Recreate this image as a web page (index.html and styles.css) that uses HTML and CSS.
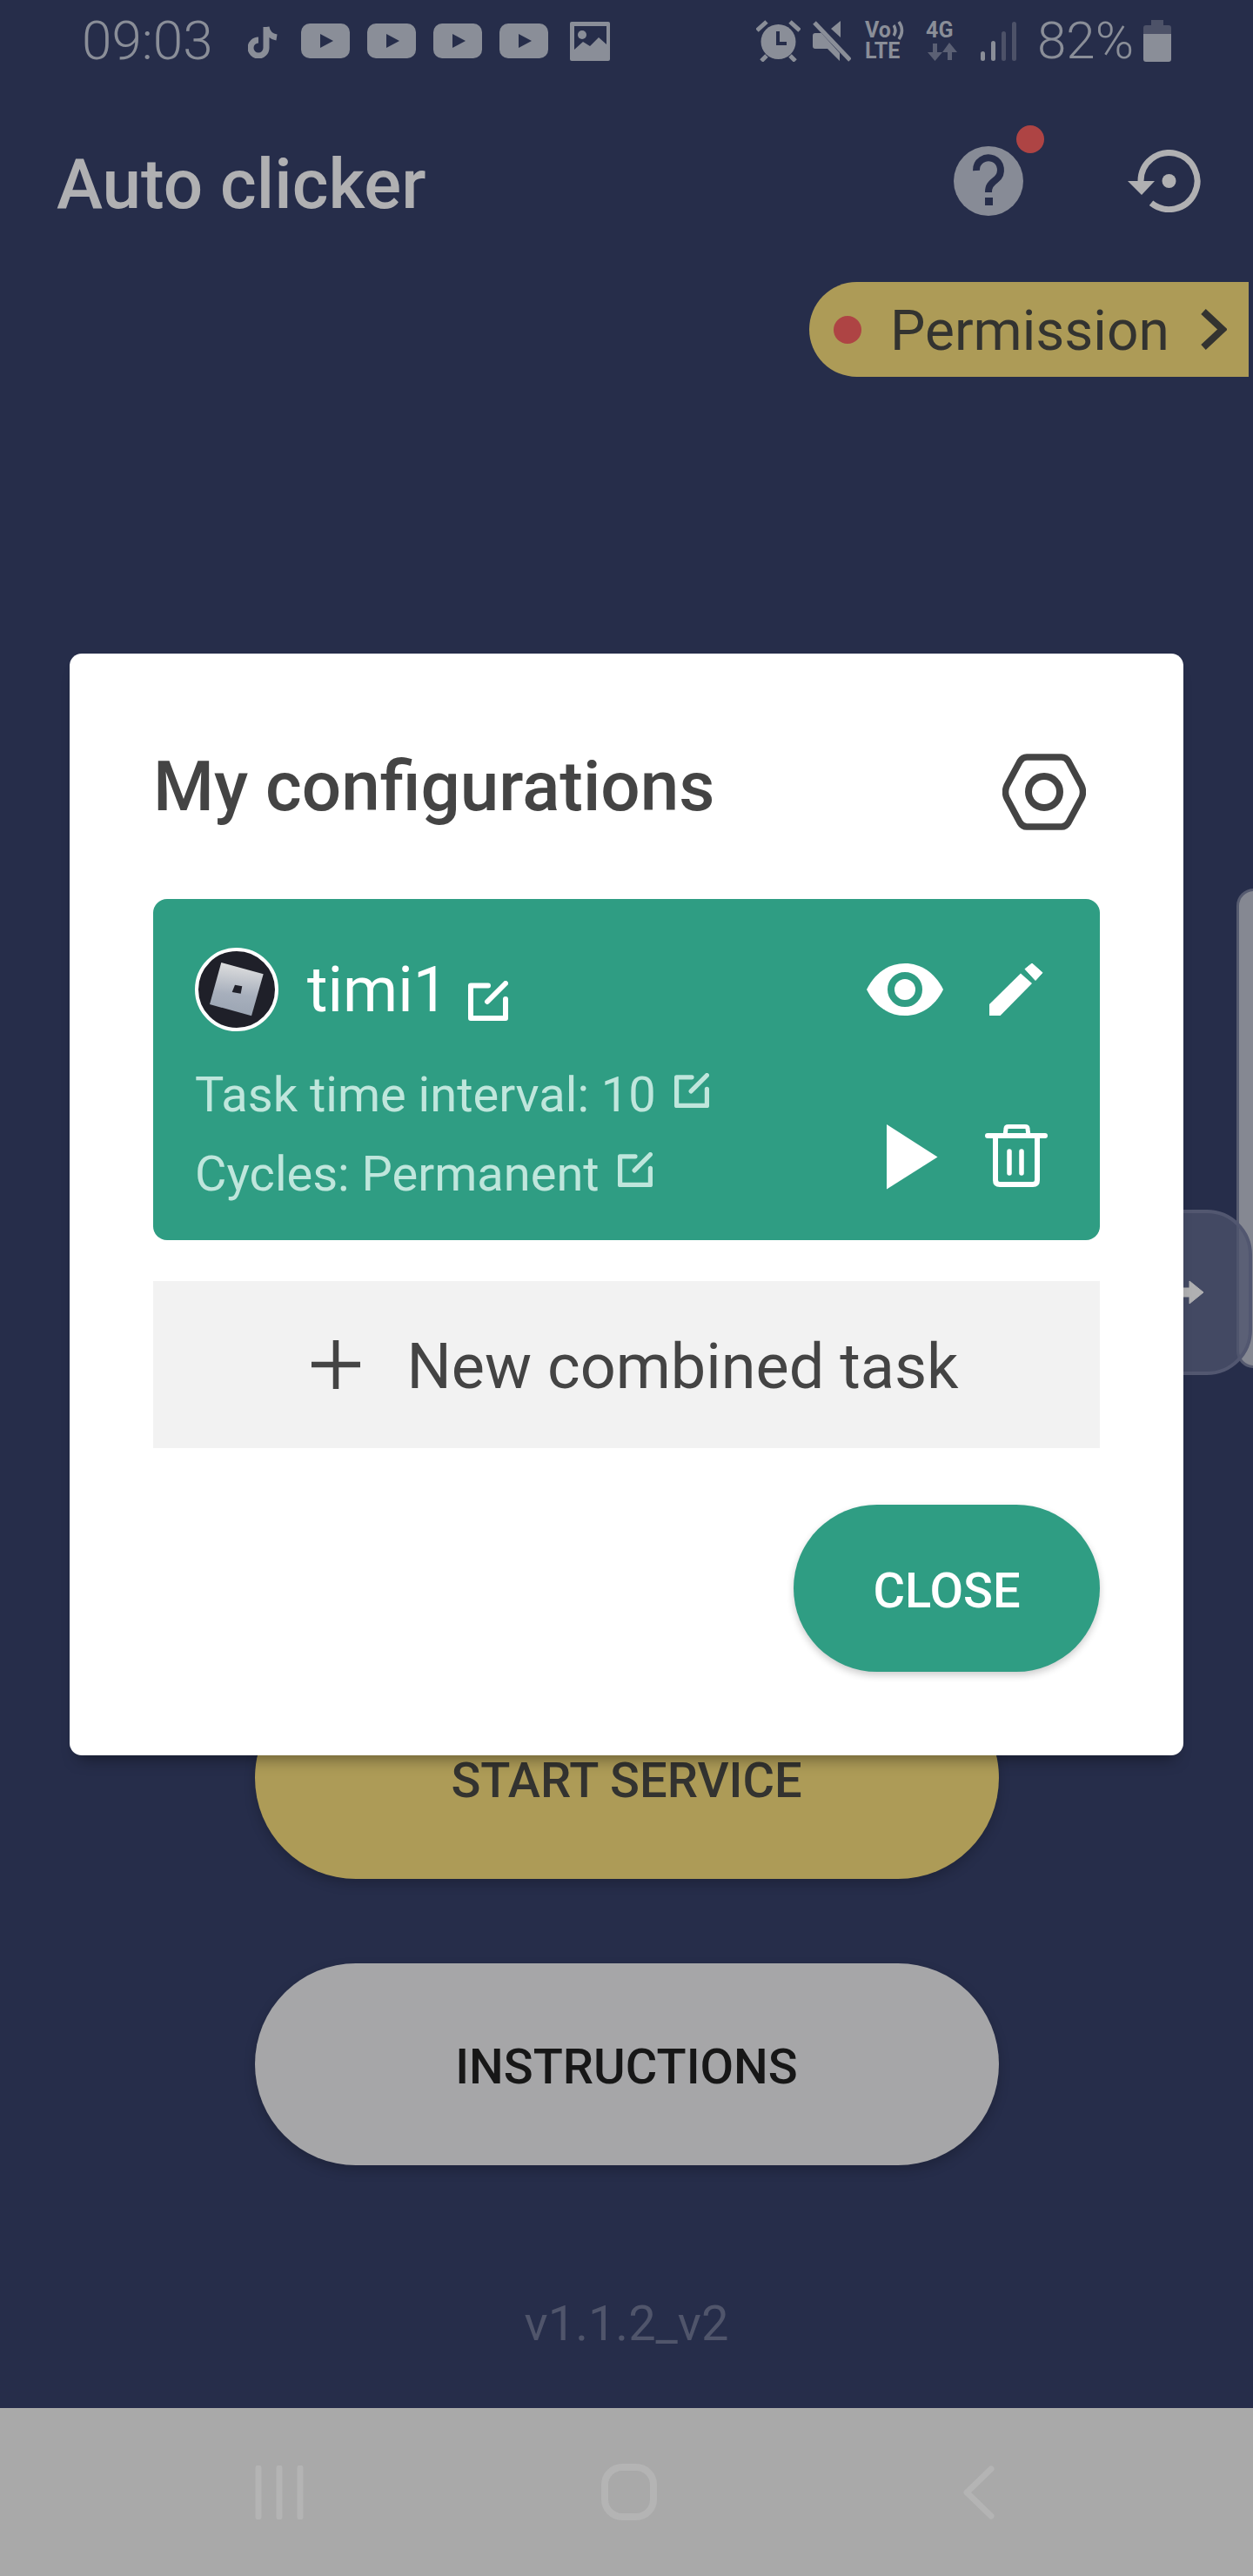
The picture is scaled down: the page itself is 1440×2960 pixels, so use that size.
FILE: index.html
```html
<!DOCTYPE html>
<html lang="en">
<head>
    <meta charset="UTF-8">
    <meta name="viewport" content="width=device-width, initial-scale=1.0">
    <title>Auto clicker</title>
    <link rel="stylesheet" href="styles.css">
</head>
<body>
    <svg class="sprite" aria-hidden="true">
        <symbol id="icon-yt" viewBox="0 0 56 40">
            <rect width="56" height="40" rx="10" fill="#8a8e98"/>
            <path d="M22 12L37 20L22 28Z" fill="#262d4a"/>
        </symbol>
        <symbol id="icon-edit" viewBox="0 0 46 46">
            <path d="M23 5.5H3V43H43V21M22 24L43 3" fill="none" stroke="currentColor" stroke-width="6" stroke-linecap="round" stroke-linejoin="round"/>
        </symbol>
    </svg>

    <div class="screen">
        <div class="status-bar">
            <div class="status-left">
                <span class="status-time">09:03</span>
                <svg class="st-tiktok" width="34" height="39" viewBox="0 0 34 39">
                    <path d="M21 3V27A9 9 0 1 1 12 18M21 3C22 10 27 14 33 15" fill="none" stroke="#8a8e98" stroke-width="7"/>
                </svg>
                <svg class="st-yt" width="56" height="40"><use href="#icon-yt"/></svg>
                <svg class="st-yt-next" width="56" height="40"><use href="#icon-yt"/></svg>
                <svg class="st-yt-next" width="56" height="40"><use href="#icon-yt"/></svg>
                <svg class="st-yt-next" width="56" height="40"><use href="#icon-yt"/></svg>
                <svg class="st-image" width="46" height="45" viewBox="0 0 46 45">
                    <rect width="46" height="45" rx="2" fill="#8a8e98"/>
                    <path d="M5 5H42V26L33 18L23 28L15 23L5 32Z" fill="#262d4a"/>
                    <circle cx="14" cy="15" r="5" fill="#8a8e98"/>
                </svg>
            </div>
            <div class="status-right">
                <svg width="51" height="48" viewBox="0 0 51 48">
                    <circle cx="25.5" cy="25" r="20" fill="#8a8e98"/>
                    <path d="M25 13V27H35" fill="none" stroke="#262d4a" stroke-width="4"/>
                    <path d="M1 12L12 2M50 12L39 2M6 47L12 41M45 47L39 41" stroke="#8a8e98" stroke-width="5"/>
                </svg>
                <svg class="st-mute" width="44" height="48" viewBox="0 0 44 48">
                    <path d="M32 1V20L21 10ZM3 15H10L31 38V47L17 33H3Q0 33 0 30V18Q0 15 3 15Z" fill="#8a8e98"/>
                    <path d="M2 3L43 46" stroke="#8a8e98" stroke-width="5"/>
                </svg>
                <div class="st-volte">
                    <span class="st-small">Vo</span>
                    <span class="st-small">LTE</span>
                    <svg class="st-waves" width="16" height="24" viewBox="0 0 16 24">
                        <path d="M1 6Q5 12 1 18M7 2Q14 12 7 22" fill="none" stroke="#8a8e98" stroke-width="3.5"/>
                    </svg>
                </div>
                <div class="st-net">
                    <span class="st-small">4G</span>
                    <svg width="37" height="24" viewBox="0 0 37 24">
                        <path d="M8 3H13V13H19L10.500 23L2 13H8Z" fill="#5b6074"/>
                        <path d="M27 2L36 13H30V22H25V13H19Z" fill="#5b6074"/>
                    </svg>
                </div>
                <svg class="st-signal" width="41" height="45" viewBox="0 0 41 45">
                    <rect x="0" y="34" width="5" height="11" rx="2.500" fill="#8a8e98"/>
                    <rect x="12" y="22" width="5" height="23" rx="2.500" fill="#8a8e98"/>
                    <rect x="24" y="11" width="5" height="34" rx="2.500" fill="#4d5268"/>
                    <rect x="36" y="0" width="5" height="45" rx="2.500" fill="#4d5268"/>
                </svg>
                <span class="status-pct">82%</span>
                <svg class="st-battery" width="32" height="48" viewBox="0 0 32 48">
                    <path d="M9 0H23V6H29Q32 6 32 9V16H0V9Q0 6 3 6H9Z" fill="#4d5268"/>
                    <path d="M0 16H32V45Q32 48 29 48H3Q0 48 0 45Z" fill="#8a8e98"/>
                </svg>
            </div>
        </div>

        <div class="app-bar">
            <h1 class="app-title">Auto clicker</h1>
            <div class="app-actions">
                <div class="help-icon">
                    <svg width="80" height="80" viewBox="0 0 80 80">
                        <circle cx="40" cy="40" r="40" fill="#878b96"/>
                        <path d="M26 28A14 14 0 1 1 49 38C43 43 40 45 40 53" fill="none" stroke="#262d4a" stroke-width="8"/>
                        <rect x="36" y="59" width="9" height="9" fill="#262d4a"/>
                    </svg>
                    <span class="help-dot"></span>
                </div>
                <svg width="84" height="72" viewBox="0 0 84 72">
                    <path d="M15 36A32.500 32.500 0 1 1 27 61.300" fill="none" stroke="#b0b0b2" stroke-width="7"/>
                    <circle cx="47.500" cy="36" r="8" fill="#b0b0b2"/>
                    <path d="M0 36H31L16 52Z" fill="#b0b0b2"/>
                </svg>
            </div>
        </div>

        <div class="permission">
            <span class="permission-dot"></span>
            <span class="permission-text">Permission</span>
            <svg width="30" height="47" viewBox="0 0 30 47">
                <path d="M3 3L25 23.500L3 44" fill="none" stroke="#333330" stroke-width="8"/>
            </svg>
        </div>

        <div class="main-actions">
            <div class="pill-btn pill-gold">START SERVICE</div>
            <div class="pill-btn pill-grey">INSTRUCTIONS</div>
        </div>
        <p class="version">v1.1.2_v2</p>

        <div class="nav-bar">
            <svg width="60" height="62" viewBox="0 0 60 62">
                <path d="M6 3V59M30 3V59M54 3V59" stroke="#b4b4b4" stroke-width="7" stroke-linecap="round"/>
            </svg>
            <svg width="64" height="65" viewBox="0 0 64 65">
                <rect x="4" y="4" width="56" height="57" rx="20" fill="none" stroke="#b4b4b4" stroke-width="8"/>
            </svg>
            <svg width="38" height="62" viewBox="0 0 38 62">
                <path d="M33 4L5 31L33 58" fill="none" stroke="#b4b4b4" stroke-width="7" stroke-linecap="round" stroke-linejoin="round"/>
            </svg>
        </div>

        <!-- floating panel on the right edge, sits behind the dialog -->
        <div class="side-panel"></div>
        <div class="side-tab">
            <svg width="28" height="28" viewBox="0 0 28 28">
                <path d="M0 9H11V1L27 14L11 27V19H0Z" fill="#b0b0b2" stroke="#b0b0b2" stroke-width="1" stroke-linejoin="round"/>
            </svg>
        </div>

        <div class="dialog">
            <div class="dialog-header">
                <h2 class="dialog-title">My configurations</h2>
                <svg width="96" height="88" viewBox="0 0 96 88">
                    <path d="M28 4H68Q73 4 76 9L91 37Q94 44 91 51L76 79Q73 84 68 84H28Q23 84 20 79L5 51Q2 44 5 37L20 9Q23 4 28 4Z" fill="none" stroke="#444" stroke-width="7.500"/>
                    <circle cx="48" cy="44" r="18" fill="none" stroke="#444" stroke-width="8"/>
                </svg>
            </div>

            <div class="config-card">
                <div class="config-info">
                    <div class="config-name-row">
                        <svg class="avatar" width="96" height="96" viewBox="0 0 96 96">
                            <defs>
                                <linearGradient id="tile" x1="0.5" y1="0" x2="0.4" y2="1">
                                    <stop offset="0" stop-color="#e0e0e0"/>
                                    <stop offset="0.6" stop-color="#a7afbc"/>
                                    <stop offset="1" stop-color="#9aa4b2"/>
                                </linearGradient>
                            </defs>
                            <circle cx="48" cy="48" r="46" fill="#1f2029" stroke="#fff" stroke-width="4"/>
                            <path d="M30.300 17L78.700 30.300L65 78.300L17 65Z" fill="url(#tile)"/>
                            <path d="M46 42.700L54.300 44.300L52.700 52.700L42.700 51Z" fill="#1f2029"/>
                        </svg>
                        <span class="config-name">timi1</span>
                        <svg class="edit-name" width="46" height="46"><use href="#icon-edit"/></svg>
                    </div>
                    <div class="config-line config-line-first">
                        <span>Task time interval: 10</span>
                        <svg width="40" height="40"><use href="#icon-edit"/></svg>
                    </div>
                    <div class="config-line">
                        <span>Cycles: Permanent</span>
                        <svg width="40" height="40"><use href="#icon-edit"/></svg>
                    </div>
                </div>

                <div class="config-actions">
                    <svg width="88" height="60" viewBox="0 0 88 60">
                        <path d="M0 30C10 10 26 0 44 0S78 10 88 30C78 50 62 60 44 60S10 50 0 30Z" fill="#fff"/>
                        <circle cx="44" cy="30" r="16" fill="none" stroke="#2f9d83" stroke-width="8"/>
                    </svg>
                    <svg width="62" height="60" viewBox="0 0 62 60">
                        <path d="M0 47L36 11.500L49 23L12.600 60H0Z" fill="#fff"/>
                        <path d="M41 6.500L49 0L61 10.700L53 19.500Z" fill="#fff" stroke="#fff" stroke-width="1" stroke-linejoin="round"/>
                    </svg>
                    <svg class="play-icon" width="59" height="75" viewBox="0 0 59 75">
                        <path d="M0 0L58.500 37.500L0 74.600Z" fill="#fff"/>
                    </svg>
                    <svg width="72" height="72" viewBox="0 0 72 72">
                        <path d="M23 13L24 5Q24 2.500 27 2.500H46Q49 2.500 49 5L50 13" fill="none" stroke="#fff" stroke-width="5"/>
                        <path d="M3 13H69" stroke="#fff" stroke-width="6" stroke-linecap="round"/>
                        <path d="M12 13V64Q12 69 17 69H55Q60 69 60 64V13" fill="none" stroke="#fff" stroke-width="6"/>
                        <path d="M28 31V56M42 31V56" stroke="#fff" stroke-width="5.500" stroke-linecap="round"/>
                    </svg>
                </div>
            </div>

            <div class="new-task">
                <svg width="56" height="56" viewBox="0 0 56 56">
                    <path d="M28 0V56M0 28H56" stroke="#444" stroke-width="6.500"/>
                </svg>
                <span class="new-task-label">New combined task</span>
            </div>

            <div class="dialog-footer">
                <div class="close-btn">CLOSE</div>
            </div>
        </div>
    </div>
</body>
</html>
```

FILE: styles.css
```css
* {
    margin: 0;
    padding: 0;
    box-sizing: border-box;
}

body {
    font-family: Roboto, 'Noto Sans', sans-serif;
    background: #262d4a;
}

svg {
    display: block;
    flex-shrink: 0;
}

.sprite {
    position: absolute;
    width: 0;
    height: 0;
}

.screen {
    position: relative;
    width: 1440px;
    height: 2960px;
    overflow: hidden;
    display: flex;
    flex-direction: column;
    background: #262d4a;
}

/* status bar */
.status-bar {
    height: 94px;
    padding: 0 94px 0 94px;
    display: flex;
    align-items: center;
    justify-content: space-between;
    color: #8a8e98;
}

.status-left,
.status-right {
    display: flex;
    align-items: center;
}

.status-time,
.status-pct {
    font-weight: 300;
    line-height: 94px;
}

.status-time { font-size: 62px; }
.status-pct { font-size: 60px; }

.st-tiktok { margin-left: 40px; }
.st-yt { margin-left: 27px; }
.st-yt-next { margin-left: 20px; }
.st-image { margin-left: 25px; }
.st-mute { margin-left: 14px; }
.status-pct { margin-left: 24px; }
.st-battery { margin-left: 11px; }

.st-volte,
.st-net {
    position: relative;
    height: 48px;
    display: flex;
    flex-direction: column;
}

.st-volte {
    width: 48px;
    margin-left: 16px;
}

.st-net {
    width: 37px;
    margin-left: 22px;
}

.st-signal { margin-left: 26px; }

.st-small {
    height: 24px;
    font-size: 25px;
    font-weight: 700;
    line-height: 24px;
    color: #8a8e98;
}

.st-waves {
    position: absolute;
    top: 0;
    right: 0;
}

/* app bar */
.app-bar {
    height: 228px;
    padding: 0 60px 0 65px;
    display: flex;
    align-items: center;
    justify-content: space-between;
}

.app-title {
    font-size: 80px;
    font-weight: 500;
    color: #b0b0b2;
    padding-top: 8px;
}

.app-actions {
    display: flex;
    align-items: center;
    gap: 120px;
}

.help-icon {
    position: relative;
}

.help-dot {
    position: absolute;
    top: -24px;
    left: 72px;
    width: 32px;
    height: 32px;
    border-radius: 50%;
    background: #ae4444;
}

/* permission pill */
.permission {
    align-self: flex-end;
    width: 505px;
    height: 109px;
    margin: 2px 5px 0 0;
    padding-left: 28px;
    display: flex;
    align-items: center;
    background: #ad9b57;
    border-radius: 55px 0 0 55px;
}

.permission-dot {
    width: 32px;
    height: 32px;
    border-radius: 50%;
    background: #ae4444;
}

.permission-text {
    margin: 0 36px 0 33px;
    padding-top: 4px;
    font-size: 64px;
    color: #333330;
}

/* main buttons */
.main-actions {
    margin-top: auto;
    display: flex;
    flex-direction: column;
    align-items: center;
    gap: 97px;
}

.pill-btn {
    width: 855px;
    height: 232px;
    padding-top: 5px;
    border-radius: 116px;
    display: flex;
    align-items: center;
    justify-content: center;
    font-size: 56px;
    font-weight: 500;
    box-shadow: 0 6px 14px rgba(0, 0, 0, 0.2);
}

.pill-gold {
    background: #ad9b57;
    color: #333330;
}

.pill-grey {
    background: #a6a6a8;
    color: #171717;
}

.version {
    margin: 150px 0 65px;
    text-align: center;
    font-size: 56px;
    line-height: 64px;
    color: #50556b;
}

/* android nav */
.nav-bar {
    height: 193px;
    padding-left: 120px;
    display: grid;
    grid-template-columns: repeat(3, 402px);
    align-items: center;
    justify-items: center;
    background: #a9a9a9;
}

/* right edge floaters */
.side-panel {
    position: absolute;
    top: 1021px;
    left: 1421px;
    width: 40px;
    height: 551px;
    background: #858892;
    border: 3px solid #565b70;
    border-radius: 24px;
}

.side-tab {
    position: absolute;
    top: 1390px;
    left: 1300px;
    width: 139px;
    height: 190px;
    padding-left: 52px;
    display: flex;
    align-items: center;
    background: rgba(78, 83, 108, 0.75);
    border: 4px solid #525770;
    border-radius: 0 52px 52px 0;
}

/* dialog */
.dialog {
    position: absolute;
    top: 751px;
    left: 80px;
    width: 1280px;
    height: 1266px;
    padding: 115px 96px 96px;
    display: flex;
    flex-direction: column;
    background: #fff;
    border-radius: 14px;
    box-shadow: 0 14px 18px -10px rgba(0, 0, 0, 0.4);
}

.dialog-header {
    display: flex;
    align-items: flex-start;
    justify-content: space-between;
    padding-right: 16px;
}

.dialog-title {
    margin-top: -2px;
    font-size: 80px;
    font-weight: 500;
    line-height: 1;
    color: #444;
}

.config-card {
    height: 392px;
    margin-top: 79px;
    padding: 56px 46px 0 48px;
    display: flex;
    justify-content: space-between;
    background: #2f9d83;
    border-radius: 16px;
}

.config-name-row {
    height: 96px;
    display: flex;
    align-items: center;
}

.config-name {
    margin-left: 33px;
    font-size: 72px;
    color: #fff;
}

.edit-name {
    margin: 25px 0 0 23px;
    color: #fff;
}

.config-line {
    margin-top: 27px;
    display: flex;
    align-items: center;
    gap: 21px;
    font-size: 56px;
    line-height: 64px;
    color: #bfe6dc;
}

.config-line svg {
    margin-top: -10px;
}

.config-line-first {
    margin-top: 41px;
}

.config-actions {
    width: 228px;
    padding-top: 18px;
    display: grid;
    grid-template-columns: 100px 100px;
    column-gap: 28px;
    row-gap: 125px;
    align-content: start;
    justify-items: center;
}

.play-icon {
    margin-left: 16px;
}

.new-task {
    height: 192px;
    margin-top: 47px;
    padding-left: 20px;
    display: flex;
    align-items: center;
    justify-content: center;
    gap: 53px;
    background: #f2f2f2;
    font-size: 72px;
    color: #444;
}

.new-task-label {
    padding-top: 5px;
}

.dialog-footer {
    margin-top: auto;
    display: flex;
    justify-content: flex-end;
}

.close-btn {
    width: 352px;
    height: 192px;
    padding-top: 5px;
    border-radius: 96px;
    display: flex;
    align-items: center;
    justify-content: center;
    background: #2f9d83;
    font-size: 56px;
    font-weight: 500;
    color: #fff;
    box-shadow: 0 4px 8px rgba(0, 0, 0, 0.2);
}
```
